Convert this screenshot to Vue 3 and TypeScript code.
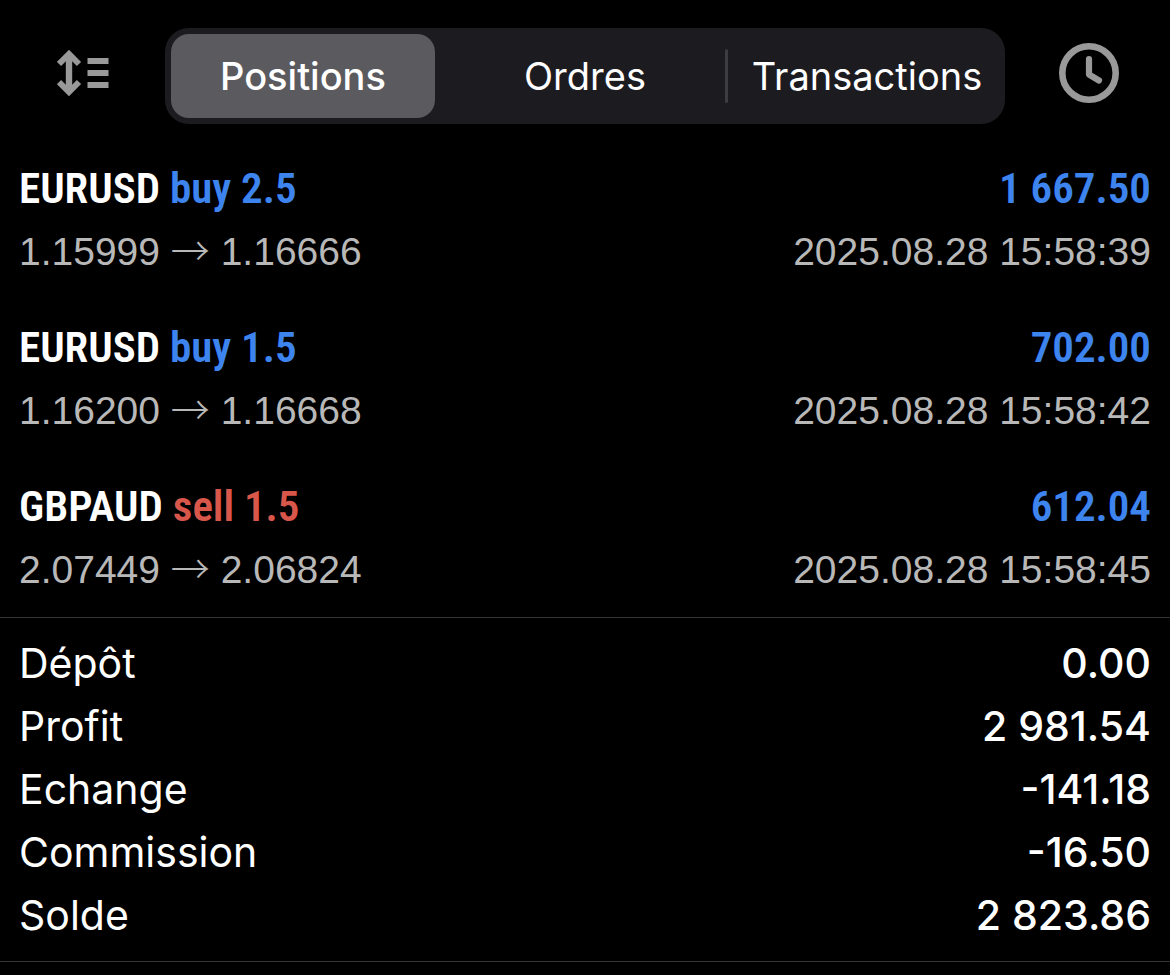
<script setup lang="ts">
import { ref } from 'vue'

interface Trade {
  symbol: string
  side: 'buy' | 'sell'
  volume: string
  open: string
  current: string
  profit: string
  time: string
}

const tabs: string[] = ['Positions', 'Ordres', 'Transactions']
const active = ref<string>('Positions')

const trades: Trade[] = [
  { symbol: 'EURUSD', side: 'buy', volume: '2.5', open: '1.15999', current: '1.16666', profit: '1 667.50', time: '2025.08.28 15:58:39' },
  { symbol: 'EURUSD', side: 'buy', volume: '1.5', open: '1.16200', current: '1.16668', profit: '702.00', time: '2025.08.28 15:58:42' },
  { symbol: 'GBPAUD', side: 'sell', volume: '1.5', open: '2.07449', current: '2.06824', profit: '612.04', time: '2025.08.28 15:58:45' },
]

const summary: { label: string; value: string }[] = [
  { label: 'Dépôt', value: '0.00' },
  { label: 'Profit', value: '2 981.54' },
  { label: 'Echange', value: '-141.18' },
  { label: 'Commission', value: '-16.50' },
  { label: 'Solde', value: '2 823.86' },
]
</script>

<template>
  <main class="history">
    <header class="topbar">
      <button class="icon-button" type="button" aria-label="Trier">
        <svg width="52" height="48" viewBox="0 0 52 48" fill="none" stroke="#999" aria-hidden="true">
          <path d="M12 5V43" stroke-width="6.4" />
          <path d="M2 15L12 5L22 15M2 33L12 43L22 33" stroke-width="6" />
          <path d="M30.500 12H51.500M30.500 24H51.500M30.500 36H51.500" stroke-width="6.2" />
        </svg>
      </button>
      <nav class="segments">
        <template v-for="(tab, i) in tabs" :key="tab">
          <span v-if="i > 0" class="separator" :class="{ hidden: tabs[i - 1] === active || tab === active }"></span>
          <button
            class="segment"
            :class="{ selected: tab === active }"
            type="button"
            :aria-pressed="tab === active"
            @click="active = tab"
          >{{ tab }}</button>
        </template>
      </nav>
      <button class="icon-button" type="button" aria-label="Période">
        <svg width="64" height="64" viewBox="0 0 64 64" fill="none" stroke="#999" stroke-linecap="round" stroke-linejoin="round" aria-hidden="true">
          <circle cx="33" cy="32" r="26.700" stroke-width="6.600" />
          <path d="M33 18V33.500L43 39.500" stroke-width="6.200" />
        </svg>
      </button>
    </header>

    <ul class="trades">
      <li v-for="trade in trades" :key="trade.time" class="trade">
        <div class="line title">
          <span>{{ trade.symbol }} <span :class="trade.side">{{ trade.side }} {{ trade.volume }}</span></span>
          <span class="buy">{{ trade.profit }}</span>
        </div>
        <div class="line detail">
          <span>{{ trade.open }} <span class="arrow">→</span> {{ trade.current }}</span>
          <time>{{ trade.time }}</time>
        </div>
      </li>
    </ul>

    <dl class="summary">
      <div v-for="row in summary" :key="row.label" class="line">
        <dt>{{ row.label }}</dt>
        <dd>{{ row.value }}</dd>
      </div>
    </dl>
  </main>
</template>

<style>
html,
body {
  background: #000;
}
</style>

<style scoped>
.history {
  min-height: 100vh;
  box-sizing: border-box;
  background: #000;
  color: #fff;
  font-family: Inter, "Liberation Sans", sans-serif;
}
.topbar {
  display: grid;
  grid-template-columns: 165px 1fr 165px;
  align-items: start;
  padding-top: 28px;
}
button {
  margin: 0;
  padding: 0;
  border: 0;
  background: none;
  color: inherit;
  font: inherit;
  cursor: pointer;
}
.icon-button {
  display: flex;
  align-items: center;
  justify-content: center;
  height: 90px;
}
.segments {
  display: flex;
  align-items: center;
  padding: 6px;
  border-radius: 24px;
  background: #1c1b1f;
}
.segment {
  flex: 1 1 0;
  height: 84px;
  border-radius: 18px;
  font-size: 38px;
  line-height: 84px;
}
.segment.selected {
  background: #5b5a5f;
  font-weight: 500;
}
.separator {
  display: flex;
  justify-content: center;
  width: 18px;
  height: 54px;
}
.separator::before {
  content: "";
  width: 3px;
  border-radius: 2px;
  background: #3d3c41;
}
.separator.hidden {
  visibility: hidden;
}
.trades {
  display: grid;
  gap: 33px;
  margin: 0;
  padding: 33px 19px 16px;
  list-style: none;
}
.line {
  display: flex;
  justify-content: space-between;
  line-height: 63px;
}
.title {
  font-family: "Avenir Next Condensed", "Roboto Condensed", "Open Sans Condensed", "Liberation Sans Narrow", sans-serif;
  font-size: 43px;
  font-weight: 600;
}
.buy {
  color: #3e84ee;
}
.sell {
  color: #d8564a;
}
.detail {
  color: #b8b8b8;
  font-family: "Liberation Sans", sans-serif;
  font-size: 39px;
}
.arrow {
  font-family: "Noto Sans CJK JP", sans-serif;
  font-weight: 300;
  line-height: 1;
}
.summary {
  margin: 0;
  padding: 14px 19px;
  border-top: 1px solid #333;
  border-bottom: 1px solid #333;
  font-size: 41px;
}
dd {
  margin: 0;
  font-weight: 500;
}
</style>
